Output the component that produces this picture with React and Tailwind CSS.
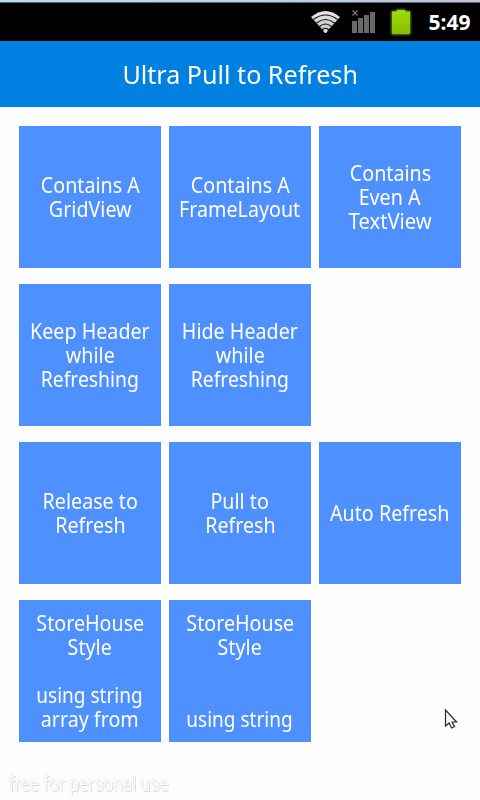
const rows = [
  [["Contains A", "GridView"], ["Contains A", "FrameLayout"], ["Contains", "Even A", "TextView"]],
  [["Keep Header", "while", "Refreshing"], ["Hide Header", "while", "Refreshing"]],
  [["Release to", "Refresh"], ["Pull to", "Refresh"], ["Auto Refresh"]],
  [["StoreHouse", "Style", "", "using string", "array from"], ["StoreHouse", "Style", "", "", "using string"]],
];

const widths = {
  "using string": "scale-x-[0.864]",
  Refreshing: "scale-x-[0.88]",
  TextView: "scale-x-[0.92]",
};

function Tile({ lines }) {
  return (
    <div className="flex h-[142px] w-[142px] flex-col items-center justify-center bg-[#4d90fe] pb-[3px]">
      {lines.map((line, i) => (
        <span
          key={i}
          className={`block h-6 origin-center whitespace-nowrap text-[22px] leading-6 text-white ${widths[line] || "scale-x-[0.895]"}`}
        >
          {line}
        </span>
      ))}
    </div>
  );
}

function StatusBar() {
  return (
    <div className="flex h-[41px] flex-col bg-black">
      <div className="h-0.5 bg-linear-to-r from-[#b5def5] to-[#bdc7d8]" />
      <div className="h-px bg-[#5c6476]" />
      <svg width="480" height="38" viewBox="0 3 480 38" className="block">
        <defs>
          <linearGradient id="wifi" x1="0" x2="0" y1="0" y2="1">
            <stop offset="0" stopColor="#e8e8e8" />
            <stop offset="1" stopColor="#bdbdbd" />
          </linearGradient>
          <linearGradient id="bat" x1="0" x2="0" y1="0" y2="1">
            <stop offset="0" stopColor="#a2dc08" />
            <stop offset="1" stopColor="#83bd00" />
          </linearGradient>
          <filter id="glow" x="-30%" y="-30%" width="160%" height="160%">
            <feGaussianBlur stdDeviation="1.3" />
          </filter>
        </defs>
        <path d="M311 17Q325.500 5 340 17L325.500 33Z" fill="url(#wifi)" />
        <g fill="none" stroke="#111" strokeWidth="1.100">
          <path d="M313.500 19.500Q325.500 10.500 337.500 19.500" />
          <path d="M316.500 23Q325.500 16 334.500 23" />
          <path d="M319.500 26.500Q325.500 21.500 331.500 26.500" />
          <path d="M322 30Q325.500 26.500 329 30" />
        </g>
        <circle cx="325.500" cy="31.300" r="1.700" fill="#ddd" />
        <path d="M352.500 10.500l5 5m0-5l-5 5" stroke="#777" strokeWidth="1.300" />
        <path d="M352 21h5v12h-5zM358 18h5v15h-5zM364 15h5v18h-5zM370 12h5v21h-5z" fill="#696969" />
        <path d="M391.500 11h5V9.500h9V11h5v23.500h-19z" fill="#76b500" filter="url(#glow)" />
        <path d="M393 11.500h4V10h8v1.500h4q1 0 1 1V33q0 1-1 1h-16q-1 0-1-1V12.500q0-1 1-1z" fill="url(#bat)" />
        <text x="428.500" y="30" fill="white" fontSize="21" fontWeight="700" textLength="42" lengthAdjust="spacingAndGlyphs">5:49</text>
      </svg>
    </div>
  );
}

export default function App() {
  return (
    <div className="flex h-[800px] w-[480px] flex-col overflow-hidden bg-[#fdfdfd] font-['Noto_Sans','Open_Sans',sans-serif]">
      <StatusBar />
      <header className="flex h-[66px] items-center justify-center bg-[#0080e0] text-[25px] leading-8 text-white">
        <span className="scale-x-[1.005]">Ultra Pull to Refresh</span>
      </header>
      <main className="flex flex-col gap-4 px-[19px] pt-[19px]">
        {rows.map((row, i) => (
          <div key={i} className="flex gap-2">
            {row.map((lines, j) => <Tile key={j} lines={lines} />)}
          </div>
        ))}
      </main>
      <div className="flex justify-end pr-[22px]">
        <svg width="14" height="21" viewBox="0 0 14 21" className="-mt-[33px]">
          <path d="M1.500 1v16l3.700-3 2.400 5 3-1.500-2.500-4.500h4.500z" fill="#f7f7fa" stroke="#22263d" strokeWidth="1.200" />
        </svg>
      </div>
      <footer className="mt-auto flex h-[31px] items-center pl-[9px] pb-px">
        <span className="origin-left scale-x-[0.885] whitespace-nowrap font-['Roboto'] text-[20px] font-light leading-6 text-[#fefefe] [text-shadow:-1px_-1px_0_#ececec,1px_1px_0_#d8d8d8]">
          free for personal use
        </span>
      </footer>
    </div>
  );
}
